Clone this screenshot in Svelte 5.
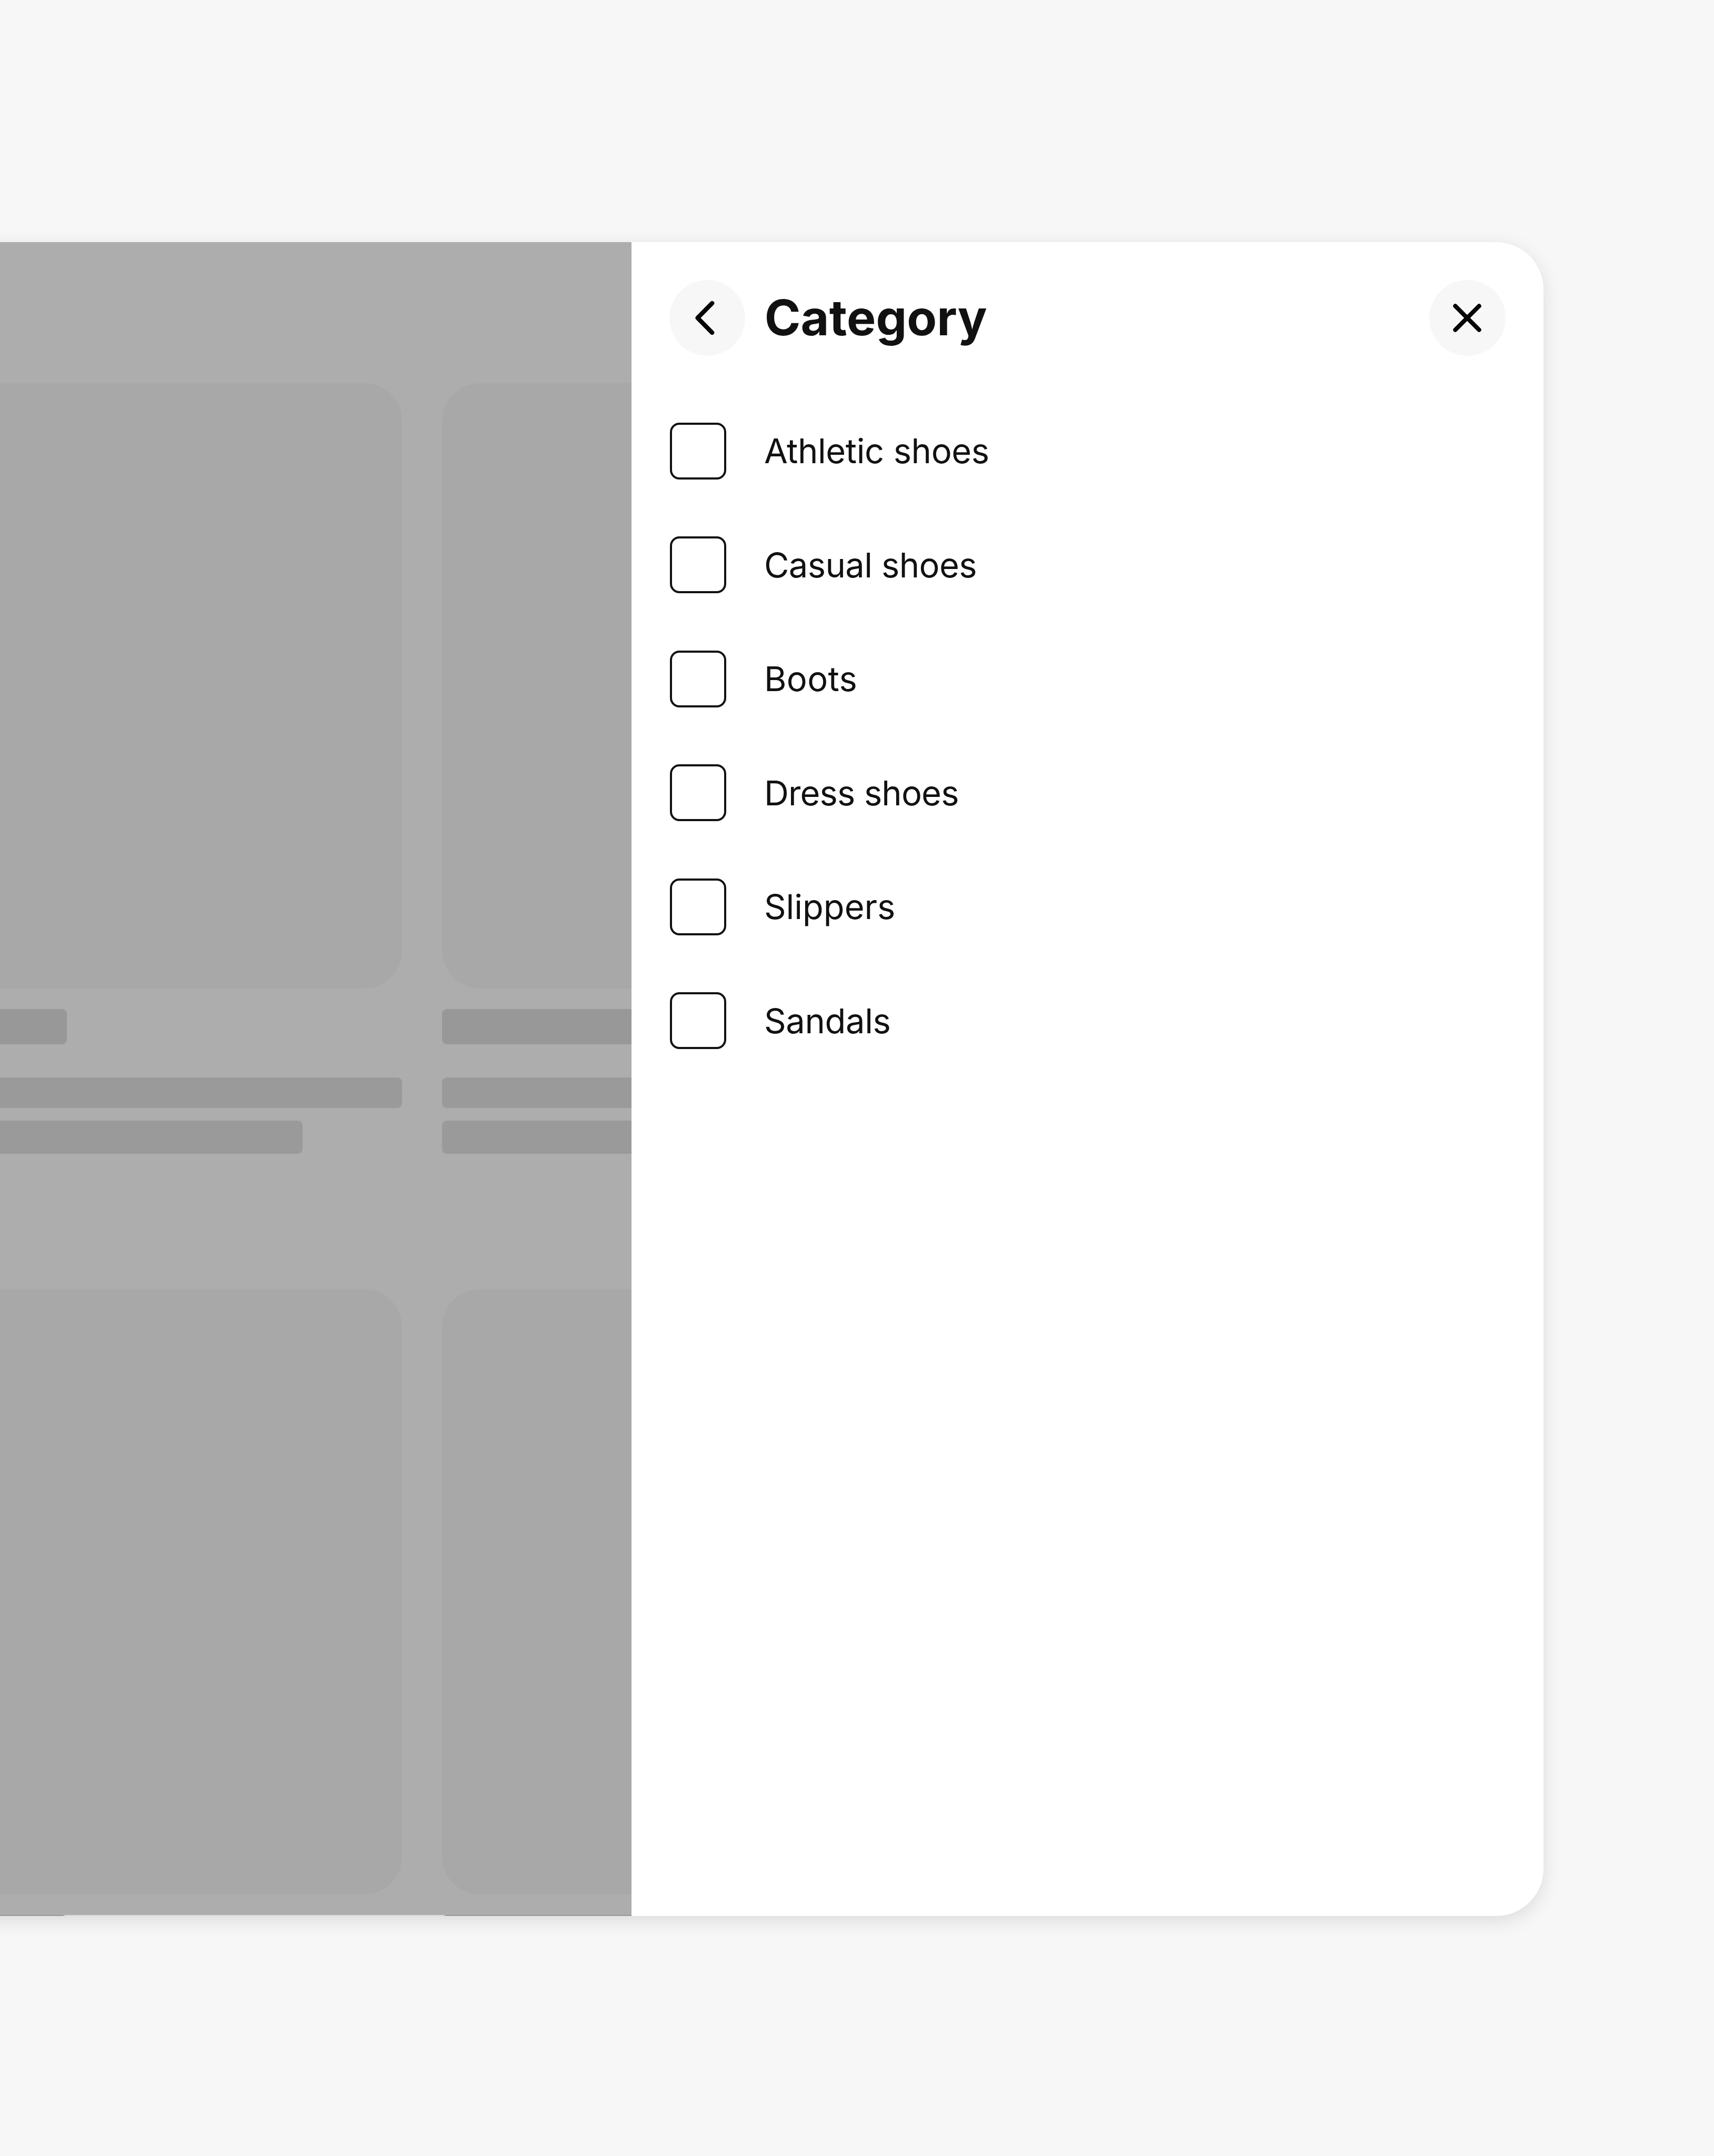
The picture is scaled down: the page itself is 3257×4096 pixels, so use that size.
<!--
    App.svelte

    Filter panel docked to the right of a dimmed product listing.
-->
<script lang="ts">
    type Option = {
        label: string;
        tracking: number;  // em
    };

    const options: Option[] = [
        { label: 'Athletic shoes', tracking: -0.006 },
        { label: 'Casual shoes', tracking: -0.009 },
        { label: 'Boots', tracking: 0.006 },
        { label: 'Dress shoes', tracking: -0.013 },
        { label: 'Slippers', tracking: 0 },
        { label: 'Sandals', tracking: -0.005 },
    ];

    const placeholders = [0, 1, 2, 3, 4, 5];
</script>

<main class="stage">
    <div class="window">
        <div class="listing" aria-hidden="true">
            {#each placeholders as id (id)}
                <div class="product">
                    <div class="product-image"></div>
                    <div class="product-price"></div>
                    <div class="product-line"></div>
                    <div class="product-line product-line-short"></div>
                </div>
            {/each}
        </div>

        <section class="panel">
            <header class="panel-header">
                <button class="icon-button" aria-label="Back">
                    <svg viewBox="0 0 72 72"><path d="M45.2 8 17.6 36l27.6 28" /></svg>
                </button>
                <h1>Category</h1>
                <button class="icon-button" aria-label="Close">
                    <svg viewBox="0 0 72 72"><path d="M13.4 13.4l45.2 45.2M58.6 13.4L13.4 58.6" /></svg>
                </button>
            </header>

            <div class="options">
                {#each options as option (option.label)}
                    <label class="option">
                        <input type="checkbox" />
                        <span style="letter-spacing: {option.tracking}em">{option.label}</span>
                    </label>
                {/each}
            </div>
        </section>
    </div>
</main>

<style>
    :global(body) {
        background: #f7f7f7;
    }

    .stage {
        box-sizing: border-box;
        height: 4096px;
        padding: 459.5px 324.3px 456px 0;
        overflow: hidden;
        background: #f7f7f7;
        color: #111;
        font-family: Inter, "Liberation Sans", sans-serif;
    }

    /* The window bleeds off the left edge of the stage. */
    .window {
        display: flex;
        height: 3180.5px;
        margin-left: -90px;
        border-radius: 0 90px 90px 0;
        background: #fff;
        box-shadow: 0 9px 36px rgba(0, 0, 0, 0.115);
    }

    .listing {
        flex: 1;
        display: grid;
        grid-template-columns: repeat(2, 763.9px);
        grid-auto-rows: 1721.3px;
        column-gap: 76.6px;
        padding: 268.5px 0 0 90px;
        box-sizing: border-box;
        min-width: 0;
        overflow: hidden;
        background: linear-gradient(#adadad calc(100% - 2px), #d8d8d8 0);
    }

    .product-image {
        height: 1150px;
        margin-bottom: 38.6px;
        border-radius: 72px;
        background: #a8a8a8;
    }

    .product:nth-child(odd) .product-image {
        border-radius: 0 72px 72px 0;
    }

    .product-price {
        width: 127px;
        height: 67.9px;
        margin-bottom: 62.4px;
        border-radius: 9px;
        background: #989898;
    }

    .product-line {
        height: 58.4px;
        margin-bottom: 23.8px;
        border-radius: 9px;
        background: #9a9a9a;
    }

    .product-line-short {
        width: 575px;
        height: 62.7px;
    }

    .product:nth-child(odd) .product-price,
    .product:nth-child(odd) .product-line {
        border-top-left-radius: 0;
        border-bottom-left-radius: 0;
    }

    .product:nth-child(even) .product-price {
        width: 560px;
    }

    .panel {
        flex: none;
        box-sizing: border-box;
        width: 1733px;
        padding: 72.2px;
    }

    .panel-header {
        display: flex;
        align-items: center;
        height: 144.4px;
    }

    h1 {
        flex: 1;
        margin: 0 0 0 36.4px;
        font-size: 93px;
        font-weight: 700;
        letter-spacing: 0.001em;
        line-height: 1;
        white-space: nowrap;
    }

    .icon-button {
        display: grid;
        place-items: center;
        width: 144.4px;
        height: 144.4px;
        padding: 0;
        border: 0;
        border-radius: 50%;
        background: #f7f7f7;
    }

    .icon-button svg {
        width: 72px;
        height: 72px;
        fill: none;
        stroke: #050505;
        stroke-width: 8.2;
        stroke-linecap: round;
        stroke-linejoin: round;
    }

    .options {
        margin-top: 72.4px;
    }

    .option {
        display: flex;
        align-items: center;
        gap: 71.6px;
        height: 216.5px;
        padding-left: 0.8px;
        font-size: 65px;
        line-height: 1;
        white-space: nowrap;
    }

    input {
        appearance: none;
        box-sizing: border-box;
        width: 107.6px;
        height: 107.6px;
        margin: 0;
        border: 4px solid #111;
        border-radius: 18px;
    }
</style>
